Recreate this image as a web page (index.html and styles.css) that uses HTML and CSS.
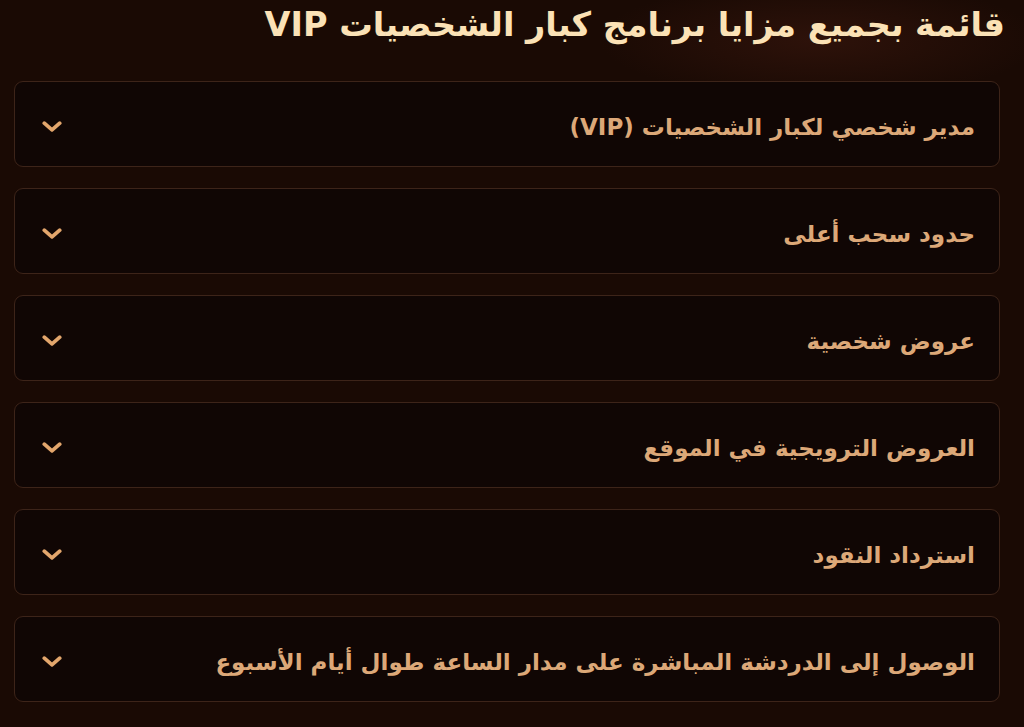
FILE: index.html
```html
<!DOCTYPE html>
<html lang="ar" dir="rtl">
<head>
<meta charset="utf-8">
<link rel="stylesheet" href="styles.css">
</head>
<body>
<div class="page">
  <h1 class="title">قائمة بجميع مزايا برنامج كبار الشخصيات VIP</h1>
  <div class="list">
    <div class="item"><span class="label">مدير شخصي لكبار الشخصيات (VIP)</span><svg class="chev" viewBox="0 0 18 10"><path d="M2 2 L9 8 L16 2"/></svg></div>
    <div class="item"><span class="label">حدود سحب أعلى</span><svg class="chev" viewBox="0 0 18 10"><path d="M2 2 L9 8 L16 2"/></svg></div>
    <div class="item"><span class="label">عروض شخصية</span><svg class="chev" viewBox="0 0 18 10"><path d="M2 2 L9 8 L16 2"/></svg></div>
    <div class="item"><span class="label">العروض الترويجية في الموقع</span><svg class="chev" viewBox="0 0 18 10"><path d="M2 2 L9 8 L16 2"/></svg></div>
    <div class="item"><span class="label">استرداد النقود</span><svg class="chev" viewBox="0 0 18 10"><path d="M2 2 L9 8 L16 2"/></svg></div>
    <div class="item"><span class="label">الوصول إلى الدردشة المباشرة على مدار الساعة طوال أيام الأسبوع</span><svg class="chev" viewBox="0 0 18 10"><path d="M2 2 L9 8 L16 2"/></svg></div>
  </div>
</div>
</body>
</html>
```

FILE: styles.css
```css
html, body {
  margin: 0;
  padding: 0;
  height: 100%;
}
body {
  background: radial-gradient(ellipse 220px 60px at 820px 40px, #2e120a 0%, rgba(26,10,4,0) 100%), #1a0a04;
  font-family: "DejaVu Sans", "Noto Sans", sans-serif;
  overflow: hidden;
}
.page {
  width: 1024px;
  height: 727px;
  box-sizing: border-box;
  padding: 0 24px 0 14px;
}
.title {
  margin: 0;
  padding: 4px 0 0 0;
  margin-right: -5px;
  height: 75px;
  box-sizing: border-box;
  font-size: 33.5px;
  font-weight: bold;
  color: #fbe2b6;
  line-height: 42px;
  white-space: nowrap;
}
.list {
  display: flex;
  flex-direction: column;
  gap: 21px;
  margin-top: 6px;
}
.item {
  height: 86px;
  box-sizing: border-box;
  border: 1.5px solid #3d2419;
  border-radius: 9px;
  background: #100604;
  display: flex;
  align-items: center;
  justify-content: space-between;
  padding: 0 24px 0 27px;
}
.label {
  color: #dca878;
  font-size: 23px;
  font-weight: bold;
  white-space: nowrap;
  padding-top: 6px;
}
.chev {
  width: 20px;
  height: 11px;
  margin-top: 4px;
  fill: none;
  stroke: #e3a66c;
  stroke-width: 3.4;
  stroke-linecap: round;
  stroke-linejoin: round;
}
```
